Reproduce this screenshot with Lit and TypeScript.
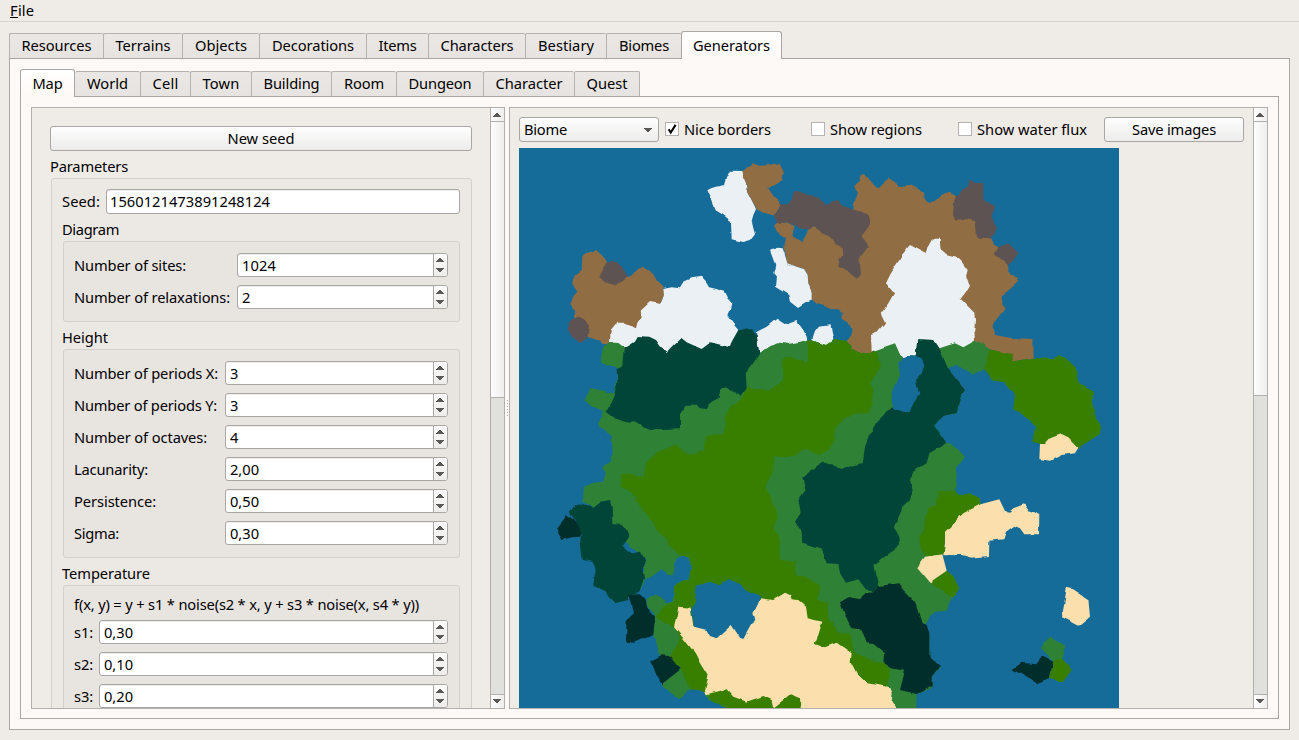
import { LitElement, html, css, svg } from "lit";
import { customElement, property } from "lit/decorators.js";

const FONT = '14.67px "Noto Sans", "Open Sans", sans-serif';
const pen = document.createElement("canvas").getContext("2d")!;

/** A run of text tracked so that it takes up a given advance width. */
@customElement("fit-text")
class FitText extends LitElement {
  @property() text = "";
  @property({ type: Number }) w = 0;
  static styles = css`
    :host { display: inline-block; white-space: pre; flex: none; line-height: 20px; }
    .run { display: block; }
  `;
  render() {
    pen.font = FONT;
    const n = this.text.length;
    const gap = (this.w - pen.measureText(this.text).width) / n;
    return html`<span class="run" style="width:${this.w}px;letter-spacing:${gap.toFixed(3)}px">${this.text}</span>`;
  }
}
const t = (text: string, w: number) => html`<fit-text .text=${text} .w=${w}></fit-text>`;

@customElement("tab-strip")
class TabStrip extends LitElement {
  @property({ attribute: false }) tabs: [string, number, number][] = [];
  @property({ type: Number }) active = 0;
  static styles = css`
    :host { display: flex; align-items: flex-end; height: 28px; margin-bottom: -1px; position: relative; }
    .tab { box-sizing: border-box; height: 25px; margin-bottom: 1px; padding: 0 0 2px 0; display: flex; align-items: center; justify-content: center;
      background: linear-gradient(#eae7e4, #e7e3e0); border: 1px solid #b6b2af; border-bottom: 0; border-right: 0; border-radius: 2px 2px 0 0; }
    .tab:last-child { border-right: 1px solid #b6b2af; }
    .after { border-left: 0; }
    .on, .on:last-child { height: 28px; margin-bottom: 0; background: linear-gradient(#ffffff, #fdf9f6); border: 1px solid #a9a6a3; border-bottom: 0; border-radius: 3px 3px 0 0; }
  `;
  render() {
    return this.tabs.map(([name, w, tw], i) => html`<div
      class="tab ${i === this.active ? "on" : ""} ${i === this.active + 1 ? "after" : ""}"
      style="width:${w}px">${t(name, tw)}</div>`);
  }
}

const up = html`<svg class="arr" width="8" height="4" shape-rendering="crispEdges"><path d="M3 0h2v1h1v1h1v1h1v1H0V3h1V2h1V1h1z" fill="#5a5856"/></svg>`;
const down = html`<svg class="arr" width="8" height="4" shape-rendering="crispEdges"><path d="M0 0h8v1H7v1H6v1H5v1H3V3H2V2H1V1H0z" fill="#5a5856"/></svg>`;

@customElement("scroll-bar")
class ScrollBar extends LitElement {
  @property({ type: Number }) handle = 275;
  static styles = css`
    :host { display: flex; flex-direction: column; width: 14px; box-sizing: border-box; border-left: 1px solid #b2afac; background: #e0e0dc; flex: none; }
    .btn { height: 13px; flex: none; display: flex; align-items: center; padding-left: 2px; background: linear-gradient(90deg, #fdfdfd, #efeeed); }
    .top { border-bottom: 1px solid #b2afac; }
    .end { border-top: 1px solid #b2afac; margin-top: auto; }
    .end .arr { margin-bottom: 1px; }
    .handle { background: linear-gradient(90deg, #fdfdfd, #efeeed); border-bottom: 1px solid #b2afac; }
  `;
  render() {
    return html`<div class="btn top">${up}</div>
      <div class="handle" style="height:${this.handle}px"></div>
      <div class="btn end">${down}</div>`;
  }
}

@customElement("spin-box")
class SpinBox extends LitElement {
  @property() value = "";
  @property({ type: Number }) tw = 0;
  static styles = css`
    :host { display: flex; flex: 1; box-sizing: border-box; height: 24px; border: 1px solid #aaa6a3; border-radius: 3px; background: #fff; overflow: hidden; box-shadow: inset 0 1px #ececeb; }
    .v { flex: 1; padding-left: 4px; display: flex; align-items: center; }
    .s { width: 11px; padding-left: 2px; border-left: 1px solid #aaa6a3; background: linear-gradient(#fdfdfd, #edecea); display: flex; flex-direction: column; justify-content: center; gap: 6px; }
    .arr { display: block; }
  `;
  render() {
    return html`<div class="v">${t(this.value, this.tw)}</div><div class="s">${up}${down}</div>`;
  }
}

const INK: Record<string, string> = {
  sea: "#166c99", tundra: "#916d43", rock: "#5d5353", snow: "#ebf0f5", taiga: "#004538",
  wood: "#2f8136", grass: "#387f00", sand: "#fbe0ad", swamp: "#002e2b",
};

/* Each sheet: origin on the page, then [biome, outline] in thirds of a pixel. */
const SHEETS: [number, number, [string, string][]][] = [
  [500, 140, [
    ["tundra", "250,345 262,335 280,335 288,330 305,345 322,370 385,412 400,398 428,380 450,395 465,405 470,422 490,442 492,465 482,492 430,610 330,612 310,612 290,600 263,590 222,530 222,510 211,495 218,475 232,458 220,440 217,430 222,408 245,390 247,350"],
    ["rock", "340,362 350,365 375,395 384,412 365,425 342,435 325,430 298,412 305,395 318,370 330,365"],
    ["rock", "238,530 255,540 267,556 263,590 250,600 240,608 225,598 205,580 203,568 210,540 225,535"],
    ["snow", "490,447 515,442 540,445 552,425 575,415 603,410 620,430 627,442 650,447 672,455 682,475 694,488 690,510 682,528 698,550 715,570 715,640 375,650 330,603 332,570 350,548 370,548 408,565 412,548 425,530 422,512 450,486 482,492 492,465"],
  ]],
  [700, 140, [
    ["snow", "90,92 128,93 130,110 138,128 140,150 155,180 168,207 160,225 155,243 160,265 165,283 152,300 130,306 95,298 93,243 70,225 42,208 35,180 22,150 45,142 72,135 78,115"],
    ["tundra", "128,93 158,70 180,78 238,70 247,88 251,95 248,120 205,145 222,170 243,190 225,226 190,218 170,208 155,180 140,150 138,128 130,110"],
    ["tundra", "460,209 462,190 474,158 462,142 480,125 485,105 495,102 505,115 533,148 552,130 570,115 580,125 600,141 635,137 655,148 672,155 675,178 685,190 705,182 725,168 745,158 767,168 800,220 875,297 893,320 925,375 925,395 955,422 935,440 908,470 907,495 913,508 880,550 885,585 930,593 1000,597 1001,653 940,664 935,645 868,628 825,605 515,645 480,640 455,625 440,603 455,585 458,568 440,548 425,540 425,515 415,508 392,507 370,497 350,492 335,478 335,455 325,432 323,405 310,385 290,380 262,370 257,345 250,320 255,295 240,285 225,262 228,250 265,247 280,258 278,287 306,305 318,285 325,268 340,262 440,230"],
    ["rock", "243,190 262,190 275,180 280,160 290,152 310,160 335,163 355,172 375,195 400,185 413,180 430,195 455,208 485,215 503,225 508,245 505,262 485,287 495,305 503,322 490,340 475,358 480,375 483,400 470,416 450,400 435,385 415,382 418,362 430,345 428,320 405,312 390,290 365,280 340,262 325,268 300,265 265,247 230,250 222,226 235,210"],
    ["snow", "210,332 235,323 248,325 255,345 262,370 290,380 312,387 323,405 325,432 335,455 335,478 294,504 270,485 265,465 225,440 228,410 220,400 226,375"],
    ["snow", "168,577 200,560 230,536 258,555 290,543 310,570 325,600 290,620 200,645 178,645"],
    ["snow", "337,600 345,575 357,560 392,556 395,575 400,597 380,620"],
  ]],
  [860, 140, [
    ["rock", "328,118 345,130 370,128 370,178 402,198 395,230 410,262 398,285 390,297 355,297 347,280 343,245 332,236 287,242 279,225 282,185 287,168 300,165 305,150 325,135"],
    ["rock", "445,310 475,338 460,365 443,374 425,362 404,345 415,322"],
    ["snow", "150,315 196,340 205,318 215,300 222,296 242,296 245,330 260,343 290,350 305,365 323,390 318,410 330,435 315,460 302,476 320,495 343,518 345,540 343,570 345,605 310,630 150,665 130,658 100,620 35,632 33,585 50,578 75,548 62,522 85,490 102,460 78,430 90,405 105,380 118,360 130,340 145,320"],
  ]],
  [540, 340, [
    ["wood", "187,30 190,20 210,5 230,5 250,20 400,60 655,40 685,20 720,8 745,12 790,3 805,-2 858,15 885,-3 920,3 935,25 960,40 995,35 1030,22 1065,10 1085,55 1128,48 1132,-2 1182,0 1198,25 1245,10 1270,22 1305,2 1330,12 1348,28 1340,85 1300,105 1250,75 1225,88 1275,150 1260,175 1250,220 1205,228 1183,258 1218,310 1230,310 1255,330 1275,350 1248,388 1250,405 1245,450 1255,468 1290,460 1300,500 1207,645 1220,695 1258,745 1240,770 1220,812 1185,815 1155,850 1168,880 1168,950 1200,980 1175,1010 1175,1045 1130,1062 1128,1140 540,1140 505,1080 495,1053 450,1048 418,1078 390,1060 365,1035 355,945 352,920 340,890 345,820 320,800 320,775 300,750 318,660 300,640 200,560 160,500 128,485 132,440 160,428 190,425 197,400 190,380 212,365 218,335 215,288 175,258 182,235 188,212 160,200 133,183 142,165 152,143 200,155 222,160 230,125 232,88 215,78 200,80 182,65"],
    ["sea", "450,1048 495,1053 505,1080 560,1104 560,1140 400,1140 418,1078"],
    ["grass", "1348,28 1415,42 1420,64 1481,53 1540,58 1557,45 1590,65 1610,90 1620,135 1658,152 1660,205 1668,235 1683,260 1680,282 1660,295 1615,323 1530,320 1500,312 1475,300 1488,260 1455,230 1420,205 1425,165 1390,127 1355,120 1335,85"],
    ["grass", "725,60 740,50 765,57 800,68 805,30 800,0 805,-2 858,15 885,-3 920,3 935,25 960,40 995,35 1010,35 1022,70 1010,105 990,128 1000,150 990,220 940,220 915,235 885,265 880,315 840,347 795,323 760,350 703,352 698,400 675,440 700,490 715,525 702,565 720,600 718,660 768,665 770,710 800,712 843,738 832,780 862,790 865,835 900,880 932,880 940,935 1000,965 1035,968 1050,990 1040,1040 800,1080 500,1060 495,1053 450,1048 440,1020 420,985 390,955 420,890 402,862 375,850 347,830 375,795 400,790 402,740 412,725 445,722 452,680 450,655 425,650 385,615 382,598 355,575 345,560 318,520 305,505 285,480 290,470 275,455 245,440 243,405 265,400 312,410 317,370 350,340 408,313 450,345 490,332 498,288 550,280 557,255 553,230 575,195 605,183 620,145 690,150 730,120 728,80"],
    ["grass", "500,1055 800,1055 785,1140 570,1140 560,1104 520,1090"],
    ["taiga", "255,25 285,5 295,-12 325,-10 345,0 360,20 380,36 400,15 423,-7 440,7 485,27 512,7 570,22 575,5 595,-30 638,-32 650,-10 658,40 640,70 617,100 620,145 605,167 575,150 555,142 540,155 535,175 515,185 500,207 480,205 470,197 440,197 420,225 420,265 350,268 338,273 310,262 280,240 262,248 225,235 200,215 222,165 232,125 230,90 250,82 252,50"],
    ["taiga", "90,515 105,495 120,490 160,500 180,485 210,480 218,500 220,552 245,555 270,587 248,618 275,640 303,635 317,665 308,690 312,715 298,755 270,765 265,780 225,790 205,770 195,750 160,735 167,685 157,665 125,660 118,600 125,585"],
    ["sea", "317,715 340,705 365,688 397,712 410,655 430,648 450,660 452,685 445,722 412,725 402,738 398,785 385,790 360,770 345,762 318,778 298,757"],
    ["sea", "338,892 350,895 355,944 330,950"],
    ["swamp", "80,522 95,535 128,575 120,590 95,592 67,600 50,567 65,550"],
    ["swamp", "268,762 300,760 317,778 320,800 345,830 340,885 315,895 285,908 258,905 260,840 282,820"],
    ["swamp", "330,962 365,943 390,945 422,988 365,1033 352,1010"],
    ["sand", "415,800 452,803 460,858 495,865 600,850 645,800 662,775 700,780 735,758 750,765 755,778 775,780 798,800 803,835 847,845 835,885 823,912 855,922 890,908 935,940 932,965 950,1000 985,1030 1050,1042 1058,1060 1055,1085 1068,1104 1068,1140 785,1140 780,1075 750,1063 730,1080 700,1103 695,1080 670,1068 620,1085 580,1070 560,1048 500,1063 495,1050 505,1010 480,970 465,940 430,895 402,862 410,830"],
    ["sea", "470,737 510,725 535,735 568,717 605,735 615,750 660,772 655,790 640,820 645,835 625,870 610,897 600,893 575,855 530,895 510,888 500,870 462,860 455,810 465,780"],
  ]],
  [740, 340, [
    ["taiga", "532,-2 582,0 598,25 625,88 675,150 660,175 650,220 605,228 583,258 618,310 568,340 560,370 520,395 510,420 518,450 510,480 490,500 462,560 483,600 470,625 400,675 405,700 415,738 400,757 375,745 355,718 318,728 300,700 295,672 260,670 245,628 187,612 185,575 165,545 182,515 175,480 197,450 187,412 235,375 250,365 305,390 330,378 368,370 375,320 385,290 410,245 450,208 528,130 527,50"],
    ["sea", "485,55 515,48 545,58 553,75 545,100 528,120 538,165 520,190 510,217 490,215 460,205 452,165 465,140 480,105 475,70"],
    ["swamp", "415,738 475,730 490,750 525,785 545,850 560,855 568,880 568,950 600,978 575,1010 575,1040 530,1062 480,1050 495,992 455,985 433,970 435,940 400,912 380,910 365,868 335,865 315,825 300,787 325,772 360,777 380,760 400,757"],
  ]],
  [880, 330, [
    ["grass", "172,487 225,480 235,498 270,490 300,505 302,523 250,570 195,610 190,675 135,678 115,625 132,600 135,560 145,535 168,530"],
    ["sand", "302,523 358,508 375,543 388,545 400,535 432,523 445,540 478,555 477,613 433,613 420,595 403,587 378,605 370,628 328,632 327,678 275,683 245,675 190,676 195,640 195,605 250,550"],
    ["grass", "150,757 200,722 220,738 238,775 220,802"],
    ["sand", "135,680 187,673 200,722 150,757 112,712"],
    ["sand", "480,342 495,342 510,325 545,312 565,322 595,353 585,370 545,375 510,392 478,387"],
    ["sand", "560,773 580,778 625,808 630,860 597,887 580,878 546,862 552,825"],
    ["wood", "510,920 558,948 548,985 520,992 483,955 490,940"],
    ["swamp", "397,1018 425,998 468,1003 490,978 520,992 510,1043 470,1060"],
    ["grass", "520,992 545,985 575,1020 548,1057 510,1043"],
  ]],
];

@customElement("biome-map")
class BiomeMap extends LitElement {
  static styles = css`
    :host { display: block; width: 600px; height: 600px; background: #166c99; }
    svg { display: block; }
  `;
  render() {
    return html`<svg width="600" height="600" viewBox="519 148 600 600">
      <filter id="coast" filterUnits="userSpaceOnUse" x="519" y="148" width="600" height="600" color-interpolation-filters="sRGB">
        <feTurbulence type="fractalNoise" baseFrequency="0.11" numOctaves="1" seed="4" result="n"/>
        <feColorMatrix in="n" type="matrix" values="1 0 0 0 0  0 1 0 0 0  0 0 1 0 0  0 0 0 0 1" result="m"/>
        <feDisplacementMap in="SourceGraphic" in2="m" scale="4" xChannelSelector="R" yChannelSelector="G"/>
      </filter>
      <g filter="url(#coast)">
        ${SHEETS.map(([x, y, cells]) => svg`<g transform="translate(${x} ${y}) scale(.33333)">
          ${cells.map(([k, p]) => svg`<polygon points=${p} fill=${INK[k]} />`)}</g>`)}
      </g>
    </svg>`;
  }
}

type Row = [string, number, string, number];
const DIAGRAM: Row[] = [["Number of sites:", 112, "1024", 34], ["Number of relaxations:", 156, "2", 8.4]];
const HEIGHT: Row[] = [
  ["Number of periods X:", 144, "3", 8.4], ["Number of periods Y:", 143, "3", 8.4],
  ["Number of octaves:", 133, "4", 8.4], ["Lacunarity:", 74, "2,00", 29],
  ["Persistence:", 82, "0,50", 29], ["Sigma:", 45, "0,30", 29],
];
const TEMP: Row[] = [["s1:", 19, "0,30", 29], ["s2:", 19, "0,10", 29], ["s3:", 19, "0,20", 29]];

@customElement("app-root")
class AppRoot extends LitElement {
  static styles = css`
    :host { display: flex; flex-direction: column; width: 1299px; height: 740px; overflow: hidden; background: #efebe7; color: #000; font: 14.67px "Noto Sans", "Open Sans", sans-serif; box-sizing: border-box; }
    * { box-sizing: border-box; }
    .menu { height: 22px; border-bottom: 1px solid #d7d3cf; padding-left: 10px; display: flex; align-items: flex-start; flex: none; }
    .key { width: 8px; height: 18px; border-bottom: 1px solid #000; flex: none; }
    .main { flex: 1; display: flex; flex-direction: column; padding: 9px 9px 10px; min-height: 0; }
    .pane { flex: 1; min-height: 0; border: 1px solid #a9a6a3; background: #fdf9f6; padding: 10px; display: flex; flex-direction: column; }
    .split { flex: 1; min-height: 0; display: flex; border: 1px solid #a9a6a3; padding: 10px 10px 9px; }
    .frame { border: 1px solid #b2afac; background: #efebe7; display: flex; overflow: hidden; }
    .left { width: 474px; }
    .right { flex: 1; }
    .grip { width: 4px; display: flex; flex-direction: column; align-items: center; justify-content: center; gap: 2px; }
    .grip i { width: 1px; height: 1px; background: #aaa7a3; }
    .params { flex: 1; padding: 18px 18px 0; overflow: hidden; display: flex; flex-direction: column; }
    .push { height: 25px; border: 1px solid #a9a6a3; border-radius: 3px; background: linear-gradient(#fefefe, #edeceb); display: flex; align-items: center; justify-content: center; flex: none; padding-bottom: 2px; }
    .cap { height: 27px; display: flex; align-items: center; padding-top: 3px; flex: none; }
    .group { border: 1px solid #d4d0cb; border-radius: 3px; background: #ece8e4; flex: none; }
    .outer { margin-left: 1px; padding: 10px 11px 40px 10px; }
    .seed { display: flex; align-items: center; }
    .seed .lab { width: 44px; padding-bottom: 2px; }
    .line { flex: 1; height: 25px; border: 1px solid #aaa6a3; border-radius: 3px; background: #fff; padding: 0 0 2px 3px; display: flex; align-items: center; box-shadow: inset 0 1px #ececeb; }
    .inner { margin-left: 1px; padding: 11px 11px 12px 10px; background: #e8e4e0; display: flex; flex-direction: column; gap: 8px; }
    .row { display: flex; align-items: center; height: 24px; }
    .formula { height: 15px; display: flex; align-items: center; padding-bottom: 2px; }
    .view { flex: 1; overflow: hidden; padding: 9px 9px 0; display: flex; flex-direction: column; gap: 6px; }
    .tools { height: 25px; display: flex; align-items: center; flex: none; }
    .combo { width: 140px; height: 25px; justify-content: space-between; padding: 0 6px 2px 4px; margin-right: 6px; }
    .combo .arr { margin-top: 2px; }
    .check { display: flex; align-items: center; gap: 5px; }
    .check fit-text { margin-top: -2px; }
    .box { width: 14px; height: 14px; border: 1px solid #b5b2af; background: #fff; margin-top: -1px; }
    .box svg { display: block; }
    .c1 { width: 146px; }
    .c2 { width: 147px; }
    .c3 { width: 146px; }
    .save { width: 140px; }
  `;

  rows(rows: Row[], lab: number) {
    return rows.map(([l, lw, v, vw]) => html`<div class="row">
      <div style="width:${lab}px">${t(l, lw)}</div><spin-box .value=${v} .tw=${vw}></spin-box></div>`);
  }

  check(cls: string, label: string, w: number, on: boolean) {
    return html`<div class="check ${cls}"><div class="box">${on
      ? html`<svg width="12" height="12" viewBox="0 0 12 12"><path d="M2.7 6.2L4.7 9.6L9.6 1.9" fill="none" stroke="#000" stroke-width="2"/></svg>` : ""}</div>${t(label, w)}</div>`;
  }

  render() {
    return html`
      <div class="menu"><div class="key">${t("F", 8)}</div>${t("ile", 16)}</div>
      <div class="main">
        <tab-strip .active=${8} .tabs=${[["Resources", 94, 70], ["Terrains", 79, 55], ["Objects", 77, 52], ["Decorations", 107, 82], ["Items", 62, 38], ["Characters", 97, 73], ["Bestiary", 81, 56], ["Biomes", 75, 50], ["Generators", 101, 77]]}></tab-strip>
        <div class="pane">
          <tab-strip .active=${0} .tabs=${[["Map", 55, 30], ["World", 65, 41], ["Cell", 50, 26], ["Town", 61, 37], ["Building", 80, 56], ["Room", 65, 40], ["Dungeon", 87, 63], ["Character", 91, 67], ["Quest", 66, 41]]}></tab-strip>
          <div class="split">
            <div class="frame left">
              <div class="params">
                <div class="push">${t("New seed", 67)}</div>
                <div class="cap">${t("Parameters", 78)}</div>
                <div class="group outer">
                  <div class="seed"><div class="lab">${t("Seed:", 38)}</div><div class="line">${t("1560121473891248124", 160)}</div></div>
                  <div class="cap">${t("Diagram", 57)}</div>
                  <div class="group inner">${this.rows(DIAGRAM, 163)}</div>
                  <div class="cap">${t("Height", 46)}</div>
                  <div class="group inner">${this.rows(HEIGHT, 151)}</div>
                  <div class="cap">${t("Temperature", 88)}</div>
                  <div class="group inner"><div class="formula">${t("f(x, y) = y + s1 * noise(s2 * x, y + s3 * noise(x, s4 * y))", 345)}</div>${this.rows(TEMP, 25)}</div>
                </div>
              </div>
              <scroll-bar .handle=${275}></scroll-bar>
            </div>
            <div class="grip">${Array.from({ length: 6 }, () => html`<i></i>`)}</div>
            <div class="frame right">
              <div class="view">
                <div class="tools">
                  <div class="push combo">${t("Biome", 43)}${down}</div>
                  ${this.check("c1", "Nice borders", 87, true)}
                  ${this.check("c2", "Show regions", 92, false)}
                  ${this.check("c3", "Show water flux", 110, false)}
                  <div class="push save">${t("Save images", 84)}</div>
                </div>
                <biome-map></biome-map>
              </div>
              <scroll-bar .handle=${273}></scroll-bar>
            </div>
          </div>
        </div>
      </div>`;
  }
}
